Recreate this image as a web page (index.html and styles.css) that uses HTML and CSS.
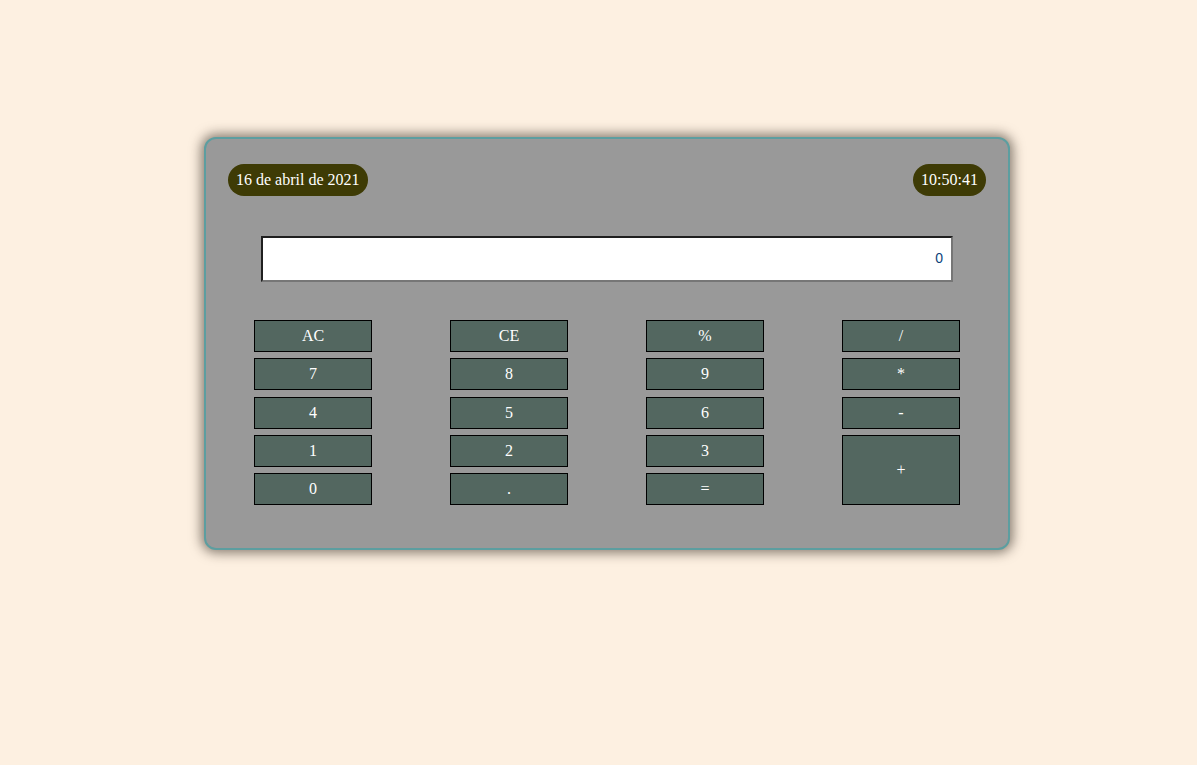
FILE: index.html
```html
<!DOCTYPE html>
<html lang="es">
<head>
<meta charset="utf-8">
<title>Calculadora</title>
<link rel="stylesheet" href="styles.css">
</head>
<body>
<main class="calc">
  <header class="calc-top">
    <span class="pill">16 de abril de 2021</span>
    <span class="pill">10:50:41</span>
  </header>
  <div class="display"><span class="display-value">0</span></div>
  <div class="keys">
    <button class="key">AC</button>
    <button class="key">CE</button>
    <button class="key">%</button>
    <button class="key">/</button>
    <button class="key">7</button>
    <button class="key">8</button>
    <button class="key">9</button>
    <button class="key">*</button>
    <button class="key">4</button>
    <button class="key">5</button>
    <button class="key">6</button>
    <button class="key">-</button>
    <button class="key">1</button>
    <button class="key">2</button>
    <button class="key">3</button>
    <button class="key key-plus">+</button>
    <button class="key">0</button>
    <button class="key">.</button>
    <button class="key">=</button>
  </div>
</main>
</body>
</html>
```
FILE: styles.css
```css
html, body {
  margin: 0;
  padding: 0;
}
body {
  background: #fdf0e1;
  min-height: 765px;
  font-family: "Liberation Serif", "Times New Roman", serif;
  padding-top: 137px;
  box-sizing: border-box;
}
.calc {
  width: 758px;
  margin-left: 204px;
  background: #999999;
  border: 2px solid #5c9ea0;
  border-radius: 12px;
  box-shadow: 0 0 12px 3px rgba(40, 30, 20, 0.55);
  padding: 25px 22px 43px;
}
.calc-top {
  display: flex;
  justify-content: space-between;
  align-items: center;
}
.pill {
  background: #3e3b05;
  color: #ffffff;
  font-size: 16px;
  line-height: 32px;
  height: 32px;
  padding: 0 8px;
  border-radius: 16px;
}
.display {
  margin: 40px 33px 0;
  height: 46px;
  background: #ffffff;
  border-style: solid;
  border-width: 2px;
  border-color: #1f1f1f #767676 #767676 #1f1f1f;
  box-sizing: border-box;
  display: flex;
  align-items: center;
  justify-content: flex-end;
  padding-right: 8px;
  padding-bottom: 2px;
}
.display-value {
  font-family: "Liberation Sans", Arial, sans-serif;
  font-size: 14px;
  color: #0b3f7a;
}
.keys {
  margin-top: 38px;
  display: grid;
  grid-template-columns: repeat(4, 118px);
  grid-auto-rows: 32px;
  column-gap: 78px;
  row-gap: 6.25px;
  justify-content: center;
}
.key {
  background: #536760;
  border: 1px solid #000000;
  color: #ffffff;
  font-family: "Liberation Serif", "Times New Roman", serif;
  font-size: 16px;
  padding: 0;
  margin: 0;
  height: 100%;
  width: 100%;
}
.key-plus {
  grid-column: 4;
  grid-row: 4 / span 2;
}
```
